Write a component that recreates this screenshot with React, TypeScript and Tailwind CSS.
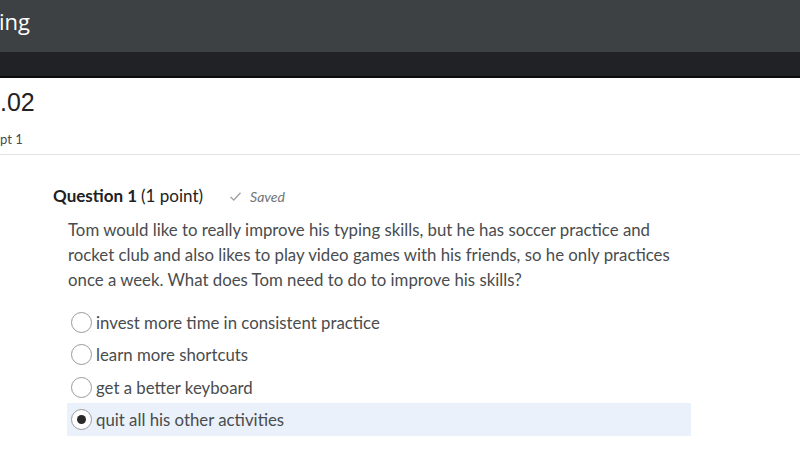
import { useState } from "react";

const options = [
  "invest more time in consistent practice",
  "learn more shortcuts",
  "get a better keyboard",
  "quit all his other activities",
];

function Radio({ checked }: { checked: boolean }) {
  return (
    <span className="flex h-[21px] w-[21px] shrink-0 items-center justify-center rounded-full border border-[#9a9a9a] bg-white">
      {checked && <span className="h-[9px] w-[9px] rounded-full bg-[#2a2a2a]" />}
    </span>
  );
}

export default function App() {
  const [selected, setSelected] = useState(3);

  return (
    <div className="h-[450px] w-[800px] overflow-hidden bg-white font-['Lato','Open_Sans',sans-serif] text-[#494c4e]">
      <div className="flex h-[52px] items-center bg-[#3e4144] pb-[10px] text-[22px] text-white font-['Open_Sans',sans-serif]">
        <span className="-ml-[1px]">ing</span>
      </div>
      <div className="h-[24px] bg-[#212225]" />
      <div className="h-[2px] bg-[#0c0c0d]" />

      <div className="border-b border-[#e3e3e3] pb-[7px]">
        <div className="mt-[8px] font-['Liberation_Sans',sans-serif] text-[25px] leading-[32px] text-[#222]">
          .02
        </div>
        <div className="mt-[13px] text-[13px] leading-[16px] text-[#494c4e]">pt 1</div>
      </div>

      <div className="pl-[53px] pt-[30px]">
        <div className="flex items-baseline text-[17px] leading-[22px] text-[#202122]">
          <span className="font-bold">Question 1</span>
          <span className="ml-[4px]">(1 point)</span>
          <span className="ml-[26px] flex items-center text-[14px] italic text-[#6e7376]">
            <svg width="13" height="11" viewBox="0 0 13 11" className="mr-[8px]">
              <path d="M1.5 6 L4.8 9 L11.5 1.8" fill="none" stroke="#a0a4a6" strokeWidth="1.4" />
            </svg>
            Saved
          </span>
        </div>

        <p className="ml-[15px] mt-[9.5px] w-[612px] text-[16.8px] leading-[25px] text-[#494c4e]">
          Tom would like to really improve his typing skills, but he has soccer practice and
          rocket club and also likes to play video games with his friends, so he only practices
          once a week. What does Tom need to do to improve his skills?
        </p>

        <div className="ml-[14px] mt-[14.5px] flex w-[624px] flex-col">
          {options.map((o, i) => (
            <label
              key={o}
              onClick={() => setSelected(i)}
              className={`flex h-[32.3px] cursor-pointer items-center gap-[4px] pl-[4px] text-[16.8px] ${
                selected === i ? "bg-[#eaf1fa]" : ""
              }`}
            >
              <Radio checked={selected === i} />
              <span className="text-[#494c4e]">{o}</span>
            </label>
          ))}
        </div>
      </div>
    </div>
  );
}
